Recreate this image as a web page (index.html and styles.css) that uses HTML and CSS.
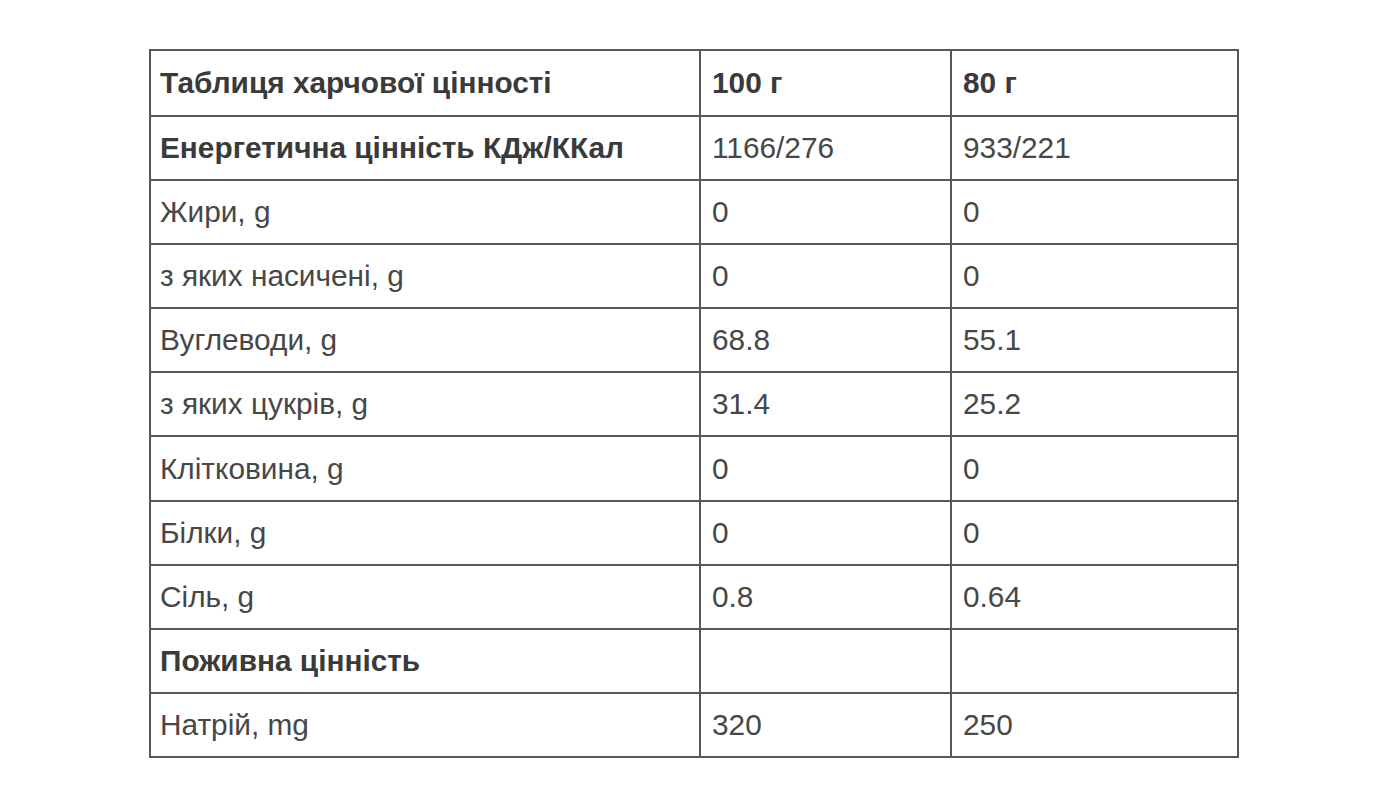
FILE: index.html
```html
<!DOCTYPE html>
<html lang="uk">
<head>
<meta charset="utf-8">
<link rel="stylesheet" href="styles.css">
</head>
<body>
<div class="wrap">
<table class="nutri">
<colgroup><col class="c1"><col class="c2"><col class="c3"></colgroup>
<tr><th>Таблиця харчової цінності</th><th>100 г</th><th>80 г</th></tr>
<tr><th>Енергетична цінність КДж/ККал</th><td>1166/276</td><td>933/221</td></tr>
<tr><td>Жири, g</td><td>0</td><td>0</td></tr>
<tr><td>з яких насичені, g</td><td>0</td><td>0</td></tr>
<tr><td>Вуглеводи, g</td><td>68.8</td><td>55.1</td></tr>
<tr><td>з яких цукрів, g</td><td>31.4</td><td>25.2</td></tr>
<tr><td>Клітковина, g</td><td>0</td><td>0</td></tr>
<tr><td>Білки, g</td><td>0</td><td>0</td></tr>
<tr><td>Сіль, g</td><td>0.8</td><td>0.64</td></tr>
<tr><th>Поживна цінність</th><td></td><td></td></tr>
<tr><td>Натрій, mg</td><td>320</td><td>250</td></tr>
</table>
</div>
</body>
</html>
```
FILE: styles.css
```css
html, body {
  margin: 0;
  padding: 0;
  background: #ffffff;
}
.wrap {
  padding: 49px 0 0 149px;
}
.nutri {
  border-collapse: collapse;
  width: 1088px;
  table-layout: fixed;
  font-family: "Liberation Sans", Arial, sans-serif;
  font-size: 29.8px;
  color: #474747;
}
.c1 { width: 550px; }
.c2 { width: 251px; }
.c3 { width: 287px; }
.nutri th, .nutri td {
  border: 2px solid #585858;
  height: 64.2px;
  padding: 0 11px 0 11px;
  text-align: left;
  vertical-align: middle;
  box-sizing: border-box;
}
.nutri tr > :first-child {
  padding-left: 9px;
}
.nutri tr:first-child th { height: 65.5px; }
.nutri th {
  font-weight: bold;
  color: #3a3a3a;
}
```
